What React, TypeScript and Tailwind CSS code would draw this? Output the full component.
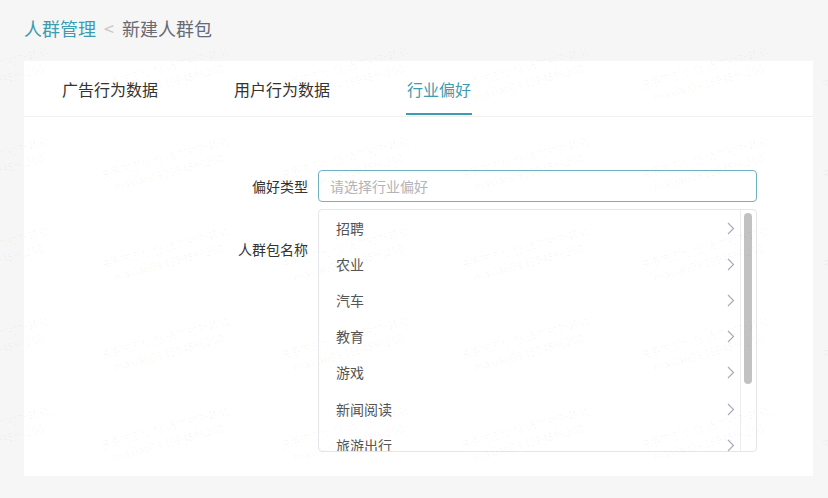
import React from "react"

const industries = ["招聘", "农业", "汽车", "教育", "游戏", "新闻阅读", "旅游出行"]

const font = { fontFamily: '"Noto Sans CJK SC", "Noto Sans", sans-serif' }

const Chevron = () => (
  <svg width="8" height="13" viewBox="0 0 8 13" fill="none" className="shrink-0">
    <path d="M1 1l5.5 5.5L1 12" stroke="#a6a9b6" strokeWidth="1.1" />
  </svg>
)

const Watermark = () => {
  const cells = Array.from({ length: 6 * 6 })
  return (
    <div className="pointer-events-none absolute inset-0 overflow-hidden">
      <div className="absolute left-[-104px] top-[30px] grid grid-cols-[repeat(6,180px)] auto-rows-[90px]">
        {cells.map((_, i) => (
          <div key={i} className="flex items-center justify-center">
            <div className="-rotate-[15deg] text-center text-[11px] leading-[15px] text-black/[0.04]">
              <div>快手内部信息 请勿对外转载</div>
              <div>maxiao03 1594896250</div>
            </div>
          </div>
        ))}
      </div>
    </div>
  )
}

const IndustryDropdown = () => (
  <div className="absolute left-0 top-[39px] flex h-[243px] w-[439px] overflow-hidden rounded-[4px] border border-[#e6e6ea] bg-white">
    <ul className="flex-1">
      {industries.map((name) => (
        <li
          key={name}
          className="flex h-[36.2px] items-center justify-between pl-[17px] pr-[5px] text-[14px] text-[#555]"
        >
          <span>{name}</span>
          <Chevron />
        </li>
      ))}
    </ul>
    <div className="w-[16px] shrink-0 border-l border-[#ececec] pt-[3px] pl-[3px]">
      <div className="h-[171px] w-[8px] rounded-full bg-[#c2c2c2]" />
    </div>
  </div>
)

export default function App() {
  return (
    <div className="relative h-[498px] w-[828px] overflow-hidden bg-[#f6f6f6]" style={font}>
      <div className="flex h-[61px] items-center gap-[8px] pl-[24px] pb-[4px] text-[18px]">
        <span className="text-[#3d9cb0]">人群管理</span>
        <span className="text-[#c8c8c8]">&lt;</span>
        <span className="text-[#666a75]">新建人群包</span>
      </div>

      <div className="ml-[24px] h-[415px] w-[789px] bg-white">
        <div className="flex h-[56px] gap-[76px] border-b border-[#f0f0f0] pl-[38px] text-[16px]">
          <div className="flex items-center text-[#333]">广告行为数据</div>
          <div className="flex items-center text-[#333]">用户行为数据</div>
          <div className="relative flex items-center px-[1px] text-[#3d9cb0]">
            行业偏好
            <div className="absolute bottom-[1px] left-0 right-0 h-[2px] bg-[#3d9cb0]" />
          </div>
        </div>

        <div className="flex flex-col gap-[31px] pt-[53px]">
          <div className="flex items-center">
            <label className="w-[294px] pr-[10px] text-right text-[14px] text-[#333]">偏好类型</label>
            <div className="relative">
              <div className="flex h-[32px] w-[439px] items-center rounded-[4px] border border-[#6fb3c2] px-[11px] text-[14px] text-[#b3b3b8]">
                请选择行业偏好
              </div>
              <IndustryDropdown />
            </div>
          </div>
          <div className="flex items-center">
            <label className="w-[294px] pr-[10px] text-right text-[14px] text-[#333]">人群包名称</label>
            <div className="h-[32px] w-[439px]" />
          </div>
        </div>
      </div>

      <Watermark />
    </div>
  )
}
